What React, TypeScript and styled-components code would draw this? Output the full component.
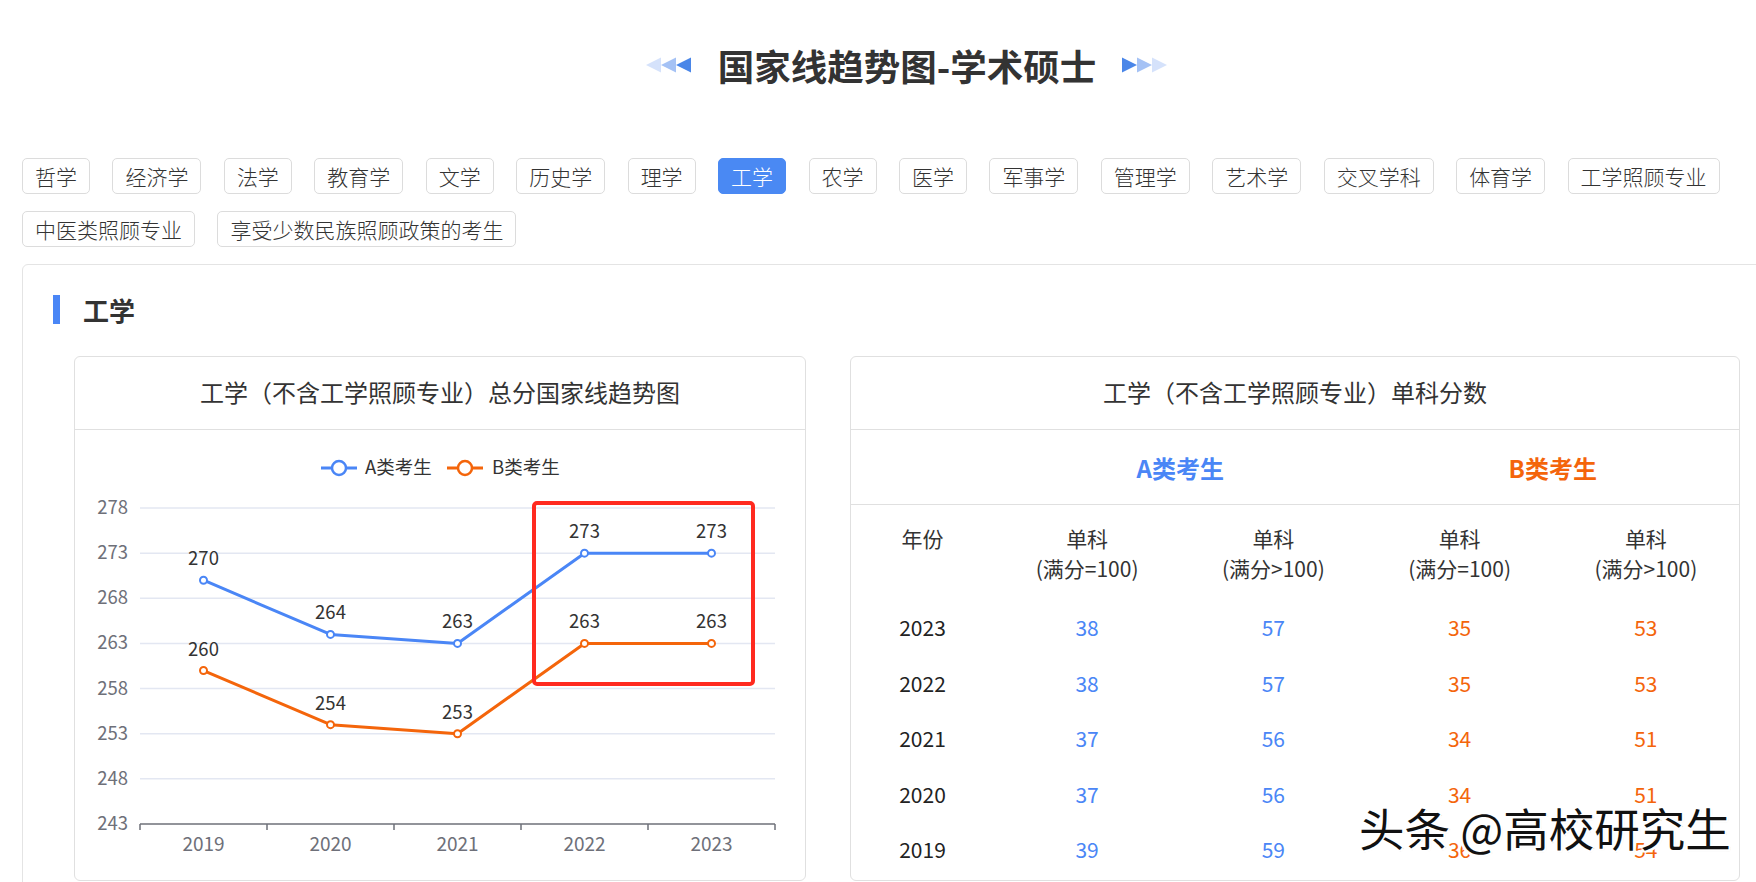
import styled, { createGlobalStyle } from "styled-components";

const BLUE = "#4a86f6";
const ORANGE = "#f4650b";

const GlobalStyle = createGlobalStyle`
  body {
    margin: 0;
    background: #fff;
    overflow-x: hidden;
    font-family: "Noto Sans CJK SC", "Noto Sans", "Liberation Sans", sans-serif;
    color: #333;
  }
`;

const Page = styled.div`
  width: 1814px;
`;

const TitleRow = styled.div`
  height: 130px;
  display: flex;
  align-items: center;
  justify-content: center;
  gap: 26px;

  h1 {
    margin: 0;
    font-size: 36.5px;
    font-weight: 700;
    color: #333;
  }
`;

const Tags = styled.div`
  display: flex;
  flex-wrap: wrap;
  gap: 17px 22.45px;
  padding: 28px 22px 0;
`;

const Tag = styled.button<{ $active?: boolean }>`
  height: 36px;
  padding: 0 12px;
  border: 1px solid ${(p) => (p.$active ? "#4a89f3" : "#dcdcdc")};
  border-radius: 5px;
  background: ${(p) => (p.$active ? "#4a89f3" : "#fff")};
  color: ${(p) => (p.$active ? "#fff" : "#333")};
  font-family: inherit;
  font-size: 21px;
  font-weight: 300;
  line-height: 34px;
  cursor: pointer;
`;

const Box = styled.section`
  margin: 17px 22px 0;
  border: 1px solid #e4e4e4;
  border-radius: 6px;
  padding: 30px 0 40px 30px;
`;

const Heading = styled.div`
  display: flex;
  align-items: center;
  gap: 23px;
  height: 29px;

  &::before {
    content: "";
    width: 7px;
    height: 29px;
    background: ${BLUE};
  }

  span {
    font-size: 26px;
    font-weight: 700;
    color: #333;
  }
`;

const Cards = styled.div`
  display: flex;
  gap: 44px;
  margin-top: 32px;
  padding-left: 21px;
`;

const Card = styled.div<{ $width: number }>`
  position: relative;
  width: ${(p) => p.$width}px;
  border: 1px solid #e0e0e0;
  border-radius: 6px;
  background: #fff;
`;

const CardHeader = styled.div`
  height: 73px;
  padding-bottom: 4px;
  box-sizing: border-box;
  border-bottom: 1px solid #e0e0e0;
  display: flex;
  align-items: center;
  justify-content: center;
  font-size: 24px;
  color: #333;
`;

const ChartBody = styled.div`
  height: 449px;

  svg {
    display: block;
    font-family: "Noto Sans CJK SC", "Liberation Sans", sans-serif;
  }
`;

const ClassRow = styled.div`
  height: 74px;
  border-bottom: 1px solid #e0e0e0;
  display: grid;
  grid-template-columns: 143px repeat(4, 1fr);
  align-items: center;
`;

const ClassLabel = styled.div<{ $color: string; $col: number }>`
  grid-column: ${(p) => p.$col} / span 2;
  text-align: center;
  font-size: 24px;
  font-weight: 700;
  color: ${(p) => p.$color};
`;

const Table = styled.div`
  display: grid;
  grid-template-columns: 143px repeat(4, 1fr);
  padding-bottom: 2px;
`;

const HeadCell = styled.div`
  padding: 18px 0 17px;
  text-align: center;
  font-size: 21px;
  line-height: 30px;
  color: #333;
`;

const Cell = styled.div<{ $color?: string }>`
  height: 55.5px;
  line-height: 55.5px;
  text-align: center;
  font-size: 21px;
  color: ${(p) => p.$color || "#222"};
`;

const Watermark = styled.div`
  position: absolute;
  left: 508px;
  top: 437px;
  font-size: 45.5px;
  color: #111;
  white-space: nowrap;
  text-shadow: 2px 2px 0 #fff, -2px -2px 0 #fff, 2px -2px 0 #fff, -2px 2px 0 #fff,
    0 2px 0 #fff, 2px 0 0 #fff, 1px 1px 1px #000;
`;

const subjects = [
  "哲学", "经济学", "法学", "教育学", "文学", "历史学", "理学", "工学", "农学",
  "医学", "军事学", "管理学", "艺术学", "交叉学科", "体育学", "工学照顾专业",
  "中医类照顾专业", "享受少数民族照顾政策的考生",
];

const years = [2019, 2020, 2021, 2022, 2023];
const lineA = [270, 264, 263, 273, 273];
const lineB = [260, 254, 253, 263, 263];

const rows = [
  { year: 2023, v: [38, 57, 35, 53] },
  { year: 2022, v: [38, 57, 35, 53] },
  { year: 2021, v: [37, 56, 34, 51] },
  { year: 2020, v: [37, 56, 34, 51] },
  { year: 2019, v: [39, 59, 36, 54] },
];

function Arrows({ dir }: { dir: "left" | "right" }) {
  const shades = ["#d5e2fb", "#a5c2f5", "#4a86e8"];
  const list = dir === "left" ? shades : [...shades].reverse();
  return (
    <svg width="46" height="18" viewBox="0 0 46 18">
      {list.map((c, i) => {
        const x = i * 15;
        const pts =
          dir === "left"
            ? `${x},9 ${x + 15},1.5 ${x + 15},16.5`
            : `${x + 15},9 ${x},1.5 ${x},16.5`;
        return <polygon key={i} points={pts} fill={c} />;
      })}
    </svg>
  );
}

const yOf = (v: number) => 394 - (v - 243) * 9.028;
const xOf = (i: number) => 128.5 + i * 127;

function TrendChart() {
  const ticks = [278, 273, 268, 263, 258, 253, 248, 243];
  const series = [
    { data: lineA, color: BLUE },
    { data: lineB, color: ORANGE },
  ];
  return (
    <svg width="728" height="449" viewBox="0 0 728 449">
      <g>
        <line x1="246" y1="38" x2="282" y2="38" stroke={BLUE} strokeWidth="3" />
        <circle cx="264" cy="38" r="7" fill="#fff" stroke={BLUE} strokeWidth="2.5" />
        <text x="290" y="44" fontSize="18.5" fill="#333">A类考生</text>
        <line x1="372" y1="38" x2="408" y2="38" stroke={ORANGE} strokeWidth="3" />
        <circle cx="390" cy="38" r="7" fill="#fff" stroke={ORANGE} strokeWidth="2.5" />
        <text x="417" y="44" fontSize="18.5" fill="#333">B类考生</text>
      </g>

      {ticks.map((t) => (
        <g key={t}>
          {t !== 243 && (
            <line x1="65" x2="700" y1={yOf(t)} y2={yOf(t)} stroke="#e3e7f2" strokeWidth="1.5" />
          )}
          <text x="53" y={yOf(t) + 6} fontSize="18.5" fill="#6e7079" textAnchor="end">
            {t}
          </text>
        </g>
      ))}

      <line x1="65" x2="700" y1="394" y2="394" stroke="#6e7079" strokeWidth="1.5" />
      {[0, 1, 2, 3, 4, 5].map((i) => (
        <line key={i} x1={65 + i * 127} x2={65 + i * 127} y1="394" y2="400" stroke="#6e7079" strokeWidth="1.5" />
      ))}
      {years.map((y, i) => (
        <text key={y} x={xOf(i)} y="421" fontSize="19" fill="#6e7079" textAnchor="middle">
          {y}
        </text>
      ))}

      {series.map((s) => (
        <g key={s.color}>
          <polyline
            points={s.data.map((v, i) => `${xOf(i)},${yOf(v)}`).join(" ")}
            fill="none"
            stroke={s.color}
            strokeWidth="3"
            strokeLinejoin="round"
          />
          {s.data.map((v, i) => (
            <g key={i}>
              <circle cx={xOf(i)} cy={yOf(v)} r="3.5" fill="#fff" stroke={s.color} strokeWidth="2" />
              <text x={xOf(i)} y={yOf(v) - 15} fontSize="18.5" fill="#333" textAnchor="middle">
                {v}
              </text>
            </g>
          ))}
        </g>
      ))}

      <rect x="459" y="73" width="219" height="181" rx="3" fill="none" stroke="#ff2a1f" strokeWidth="4" />
    </svg>
  );
}

export default function App() {
  return (
    <Page>
      <GlobalStyle />
      <TitleRow>
        <Arrows dir="left" />
        <h1>国家线趋势图-学术硕士</h1>
        <Arrows dir="right" />
      </TitleRow>

      <Tags>
        {subjects.map((s) => (
          <Tag key={s} $active={s === "工学"}>
            {s}
          </Tag>
        ))}
      </Tags>

      <Box>
        <Heading>
          <span>工学</span>
        </Heading>
        <Cards>
          <Card $width={730}>
            <CardHeader>工学（不含工学照顾专业）总分国家线趋势图</CardHeader>
            <ChartBody>
              <TrendChart />
            </ChartBody>
          </Card>

          <Card $width={888}>
            <CardHeader>工学（不含工学照顾专业）单科分数</CardHeader>
            <ClassRow>
              <ClassLabel $color={BLUE} $col={2}>A类考生</ClassLabel>
              <ClassLabel $color={ORANGE} $col={4}>B类考生</ClassLabel>
            </ClassRow>
            <Table>
              <HeadCell>年份</HeadCell>
              <HeadCell>单科<br />(满分=100)</HeadCell>
              <HeadCell>单科<br />(满分&gt;100)</HeadCell>
              <HeadCell>单科<br />(满分=100)</HeadCell>
              <HeadCell>单科<br />(满分&gt;100)</HeadCell>
              {rows.map((r) => (
                <>
                  <Cell key={`${r.year}-y`}>{r.year}</Cell>
                  {r.v.map((v, i) => (
                    <Cell key={`${r.year}-${i}`} $color={i < 2 ? BLUE : ORANGE}>
                      {v}
                    </Cell>
                  ))}
                </>
              ))}
            </Table>
            <Watermark>头条 @高校研究生</Watermark>
          </Card>
        </Cards>
      </Box>
    </Page>
  );
}
